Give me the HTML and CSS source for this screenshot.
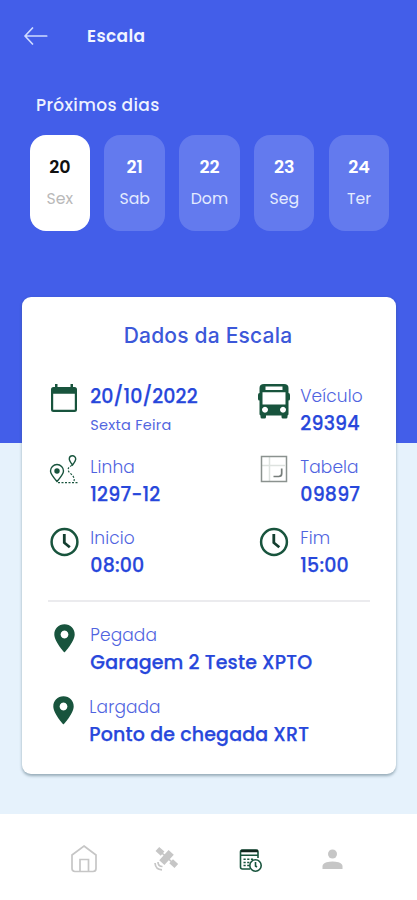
FILE: index.html
```html
<!DOCTYPE html>
<html lang="pt-BR">
<head>
<meta charset="utf-8">
<meta name="viewport" content="width=device-width, initial-scale=1">
<title>Escala</title>
<link rel="stylesheet" href="styles.css">
</head>
<body>
<div class="app">
  <main class="screen">
    <header class="topbar">
      <svg class="back" width="24" height="18" viewBox="0 0 24 18"><path d="M8.500 1 1 9 8.500 17M1.500 9H22.700"/></svg>
      <h1>Escala</h1>
    </header>
    <h2 class="upcoming">Próximos dias</h2>
    <div class="days">
      <div class="day active"><b>20</b><span>Sex</span></div>
      <div class="day"><b>21</b><span>Sab</span></div>
      <div class="day"><b>22</b><span>Dom</span></div>
      <div class="day"><b>23</b><span>Seg</span></div>
      <div class="day"><b>24</b><span>Ter</span></div>
    </div>
    <section class="card">
      <h3>Dados da Escala</h3>
      <div class="grid">
        <div class="item">
          <svg width="32" height="36" viewBox="0 0 32 36"><path class="fill" fill-rule="evenodd" d="M6 1h2.500v3h13V1H24v3h1.500q2.500 0 2.500 2.500V26.500q0 2.500-2.500 2.500H4.500Q2 29 2 26.500V6.500Q2 4 4.500 4H6zM4.200 10.800V26.700H25.800V10.800z"/></svg>
          <div class="text"><strong class="date">20/10/2022</strong><small>Sexta Feira</small></div>
        </div>
        <div class="item">
          <svg width="34" height="38" viewBox="0 0 34 38"><path class="fill" fill-rule="evenodd" d="M7 1H27Q31.500 1 31.500 5V10q1.500 0 1.500 2v4q0 1.500-1.500 1.500V31q0 1-1 1.500V34q0 1.500-1.500 1.500h-3q-1.500 0-1.500-1.500v-1.500H9V34q0 1.500-1.500 1.500H5Q3.500 35.500 3.500 34v-1.500q-1-.5-1-1.500V17.500Q1 17.500 1 16v-4q0-2 1.500-2V5Q2.500 1 7 1zM8.500 3.500v3.500h17V3.500zM5.500 9.300V21.500h23V9.300zM8 23.800a3 3 0 1 0 .01 0zM26 23.800a3 3 0 1 0 .01 0z"/></svg>
          <div class="text"><span>Veículo</span><strong>29394</strong></div>
        </div>
        <div class="item">
          <svg width="32" height="36" viewBox="0 0 32 36"><g class="line thin"><path d="M8 27.500C4.500 23.500 1.500 20 1.500 17a6.500 6.500 0 0 1 13 0C14.500 20 11.500 23.500 8 27.500zM23.500 11c-2-2.700-3.200-4.200-3.200-6a3.200 3.200 0 0 1 6.400 0c0 1.800-1.200 3.300-3.200 6z"/><path class="trail" stroke-dasharray="2 1.500" d="M23 11.500C18 13 18.500 17 21 19s5 5 4 8M9 28.700H29"/></g><circle class="fill" cx="8" cy="17" r="2.700"/></svg>
          <div class="text"><span>Linha</span><strong>1297-12</strong></div>
        </div>
        <div class="item">
          <svg width="34" height="36" viewBox="0 0 34 36"><path class="rule" d="M12.500 3V27M4 11.500H28"/><path class="frame" d="M4.500 2.500h25v25h-25z"/><path class="turn" d="M24.700 14.500v5q0 3-3 3H16.500"/></svg>
          <div class="text"><span>Tabela</span><strong>09897</strong></div>
        </div>
        <div class="item">
          <svg width="32" height="36" viewBox="0 0 32 36"><circle class="line" cx="15.500" cy="17" r="12.900"/><path class="line hand" d="M15.300 9v8.700l5.500 4.600"/></svg>
          <div class="text"><span>Inicio</span><strong>08:00</strong></div>
        </div>
        <div class="item">
          <svg width="34" height="36" viewBox="0 0 34 36"><circle class="line" cx="17" cy="17" r="12.900"/><path class="line hand" d="M16.800 9v8.700l5.500 4.600"/></svg>
          <div class="text"><span>Fim</span><strong class="tight">15:00</strong></div>
        </div>
      </div>
      <hr>
      <div class="stops">
        <div class="item">
          <svg width="32" height="36" viewBox="0 0 32 36"><path class="fill" fill-rule="evenodd" d="M15.500 2.200C9.500 2.200 5.300 6.600 5.300 12.400c0 7 10.200 18 10.200 18s10.200-11 10.200-18c0-5.800-4.200-10.200-10.200-10.200zM15.500 8.600a3.900 3.900 0 1 1-.01 0z"/></svg>
          <div class="text"><span>Pegada</span><strong>Garagem 2 Teste XPTO</strong></div>
        </div>
        <div class="item last">
          <svg width="32" height="36" viewBox="0 0 32 36"><path class="fill" fill-rule="evenodd" d="M15.500 2.200C9.500 2.200 5.300 6.600 5.300 12.400c0 7 10.200 18 10.200 18s10.200-11 10.200-18c0-5.800-4.200-10.200-10.200-10.200zM15.500 8.600a3.900 3.900 0 1 1-.01 0z"/></svg>
          <div class="text"><span>Largada</span><strong>Ponto de chegada XRT</strong></div>
        </div>
      </div>
    </section>
  </main>
  <nav class="tabs">
    <svg width="32" height="32" viewBox="0 0 32 32"><path class="muted-line" d="M16 3 28 12V25.500q0 3-3 3H7q-3 0-3-3V12zM12 28V16.500h8.500v11.500"/></svg>
    <svg width="32" height="32" viewBox="0 0 32 32"><g class="muted" transform="rotate(42 15.500 14.500)"><path d="M12 7.500h7v14h-7zM3 11.500h7v5.500H3zM21.500 11.500h7v5.500h-7zM10 13.500h12v1.500H10z"/></g><path class="muted-line" d="M7 19q0 4.500 4.500 4.500M4 20q.5 6.500 7 6.800"/></svg>
    <svg width="32" height="32" viewBox="0 0 32 32"><path class="line nav-line" d="M16 26H8.500q-2 0-2-2V9q0-2 2-2H22q2 0 2 2V15M7 12.300h17"/><path class="head" d="M7 8h17"/><path class="line nav-line" stroke-dasharray="2.200 1.500" d="M9.500 16.300h10.500M9.500 19.500h7M9.500 22.500h6"/><circle class="line nav-line" cx="21.500" cy="22.500" r="5.700"/><path class="line nav-line" d="M21.500 19v4l1.500 1"/></svg>
    <svg width="32" height="32" viewBox="0 0 32 32"><g class="muted"><circle cx="15.500" cy="11" r="4.500"/><path d="M5.500 26v-2.500q0-3 4-4.200 6-1.600 12 0 4 1.200 4 4.200v2.500z"/></g></svg>
  </nav>
</div>
</body>
</html>
```
FILE: styles.css
```css
* { box-sizing: border-box; }
body { margin: 0; font-family: Poppins, Inter, sans-serif; }
h1, h2, h3 { margin: 0; }
svg { display: block; flex: none; fill: none; }

.app { width: 417px; height: 900px; display: flex; flex-direction: column; background: #fff; overflow: hidden; }
.screen { height: 814px; padding: 24px 21px 0 22px; background: linear-gradient(#435ee9 443px, #e6f2fc 443px); }

.topbar { display: flex; align-items: center; height: 24px; padding-left: 2px; }
.back { stroke: #cfdbff; stroke-width: 1.7; stroke-linecap: round; stroke-linejoin: round; }
.topbar h1 { margin-left: 39px; font-size: 17px; line-height: 24px; font-weight: 600; letter-spacing: .35px; color: #f1f5ff; }
.upcoming { margin: 45px 0 0 14px; font-size: 17px; line-height: 24px; font-weight: 500; letter-spacing: .35px; color: #edf2ff; }

.days { display: flex; gap: 14.500px; margin: 18px 0 0 7.700px; }
.day { width: 60.300px; height: 96px; padding-top: 20px; border-radius: 16px; background: #637aee; color: #e4ebff; text-align: center; }
.day b, .day span { display: block; }
.day b { font-size: 17.500px; line-height: 24px; font-weight: 600; color: #fff; }
.day span { margin-top: 8px; font-size: 15.700px; line-height: 24px; font-weight: 400; }
.day.active { background: #fff; color: #b9b9b9; }
.day.active b { color: #101010; }

.card { height: 477px; margin-top: 65.500px; padding: 26px 26px 0; border-radius: 9px; background: #fff; box-shadow: 0 1.500px 3px rgba(40, 75, 90, .42); }
.card h3 { text-align: center; font-family: Inter, sans-serif; font-size: 21px; line-height: 26px; font-weight: 500; letter-spacing: .2px; margin-right: 2px; color: #3c58d9; }
.grid { display: grid; grid-template-columns: 209px 1fr; grid-auto-rows: 54px; row-gap: 17.300px; padding-top: 34px; }
.item { display: flex; align-items: flex-start; margin-left: 1px; }
.grid .item:nth-child(even) { margin-left: 0; }
.text { margin-left: 9.300px; white-space: nowrap; }
.text > * { display: block; height: 27px; line-height: 27px; }
.text span { font-size: 17px; font-weight: 300; letter-spacing: .1px; color: #4f63df; }
.text strong { font-size: 19px; font-weight: 500; letter-spacing: .16px; color: #2747db; -webkit-text-stroke: .25px #2747db; }
.text .date { letter-spacing: .08px; }
.text small { font-size: 14.500px; line-height: 30px; font-weight: 400; letter-spacing: .25px; color: #5266e0; }
hr { height: 2px; margin: 20.500px 0 0; border: 0; background: #ebebee; }
.stops { display: grid; row-gap: 17.500px; padding-top: 20.700px; }
.stops .item { height: 54px; }
.stops .last { margin-left: 0; }

.fill { fill: #18543d; }
.line { stroke: #18543d; stroke-width: 2.500; }
.hand { stroke: #143e30; stroke-width: 2.800; }
.thin { stroke-width: 1.400; }
.trail { stroke-width: 1.200; }
.frame { stroke: #8b928f; stroke-width: 1.500; }
.rule { stroke: #dde2df; stroke-width: 1.500; }
.turn { stroke: #777e7b; stroke-width: 1.700; }

.tabs { display: grid; grid-template-columns: repeat(4, 32px); column-gap: 51px; padding: 29px 0 0 68px; }
.muted { fill: #c6c6c6; }
.muted-line { stroke: #c6c6c6; stroke-width: 1.700; }
.nav-line { stroke-width: 1.600; }
.head { stroke: #13271f; stroke-width: 2.500; }
```
